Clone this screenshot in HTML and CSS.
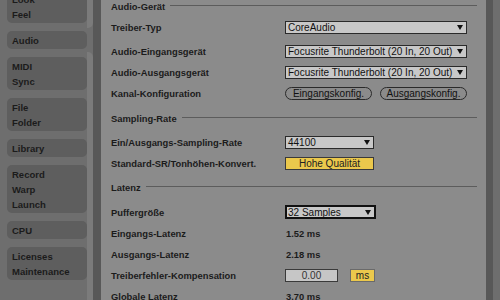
FILE: index.html
```html
<!DOCTYPE html>
<html lang="de">
<head>
  <meta charset="UTF-8">
  <title>Einstellungen – Audio</title>
  <link rel="stylesheet" href="styles.css">
</head>
<body>

<div class="window">
  <nav class="sidebar">
    <div class="tabs">
      <div class="tab first"><span>Look</span><span>Feel</span></div>
      <div class="tab"><span>Audio</span></div>
      <div class="tab"><span>MIDI</span><span>Sync</span></div>
      <div class="tab"><span>File</span><span>Folder</span></div>
      <div class="tab"><span>Library</span></div>
      <div class="tab"><span>Record</span><span>Warp</span><span>Launch</span></div>
      <div class="tab"><span>CPU</span></div>
      <div class="tab"><span>Licenses</span><span>Maintenance</span></div>
    </div>
    <div class="edge">
      <div class="edge-top"></div>
      <div class="edge-bottom"></div>
    </div>
  </nav>

  <div class="divider"></div>

  <main class="panel">
    <!-- Audio-Gerät -->
    <div class="heading first"><span>Audio-Gerät</span></div>
    <div class="row">
      <div class="label">Treiber-Typ</div>
      <div class="select wide">CoreAudio</div>
    </div>
    <div class="row spaced">
      <div class="label">Audio-Eingangsgerät</div>
      <div class="select wide">Focusrite Thunderbolt (20 In, 20 Out)</div>
    </div>
    <div class="row">
      <div class="label">Audio-Ausgangsgerät</div>
      <div class="select wide">Focusrite Thunderbolt (20 In, 20 Out)</div>
    </div>
    <div class="row">
      <div class="label">Kanal-Konfiguration</div>
      <div class="pills">
        <div class="pill">Eingangskonfig.</div>
        <div class="pill">Ausgangskonfig.</div>
      </div>
    </div>

    <!-- Sampling-Rate -->
    <div class="heading section"><span>Sampling-Rate</span></div>
    <div class="row">
      <div class="label">Ein/Ausgangs-Sampling-Rate</div>
      <div class="select narrow">44100</div>
    </div>
    <div class="row">
      <div class="label">Standard-SR/Tonhöhen-Konvert.</div>
      <div class="toggle narrow">Hohe Qualität</div>
    </div>

    <!-- Latenz -->
    <div class="heading section latency"><span>Latenz</span></div>
    <div class="row">
      <div class="label">Puffergröße</div>
      <div class="select narrow focused">32 Samples</div>
    </div>
    <div class="row">
      <div class="label">Eingangs-Latenz</div>
      <div class="value">1.52 ms</div>
    </div>
    <div class="row">
      <div class="label">Ausgangs-Latenz</div>
      <div class="value">2.18 ms</div>
    </div>
    <div class="row">
      <div class="label">Treiberfehler-Kompensation</div>
      <div class="number">0.00</div>
      <div class="toggle unit">ms</div>
    </div>
    <div class="row">
      <div class="label">Globale Latenz</div>
      <div class="value">3.70 ms</div>
    </div>
  </main>

  <div class="scrollbar"></div>
  <div class="rail"></div>
</div>

</body>
</html>
```

FILE: styles.css
```css
body {
  margin: 0;
  padding: 0;
  width: 500px;
  height: 300px;
  overflow: hidden;
  font-family: 'Liberation Sans', Arial, sans-serif;
  color: #1b1b1b;
  background: #6e6e6e;
}

.window {
  display: flex;
  height: 300px;
}

/* Seitenleiste */
.sidebar {
  display: flex;
  width: 93px;
  flex-shrink: 0;
  background: #6e6e6e;
}

.tabs {
  width: 80px;
  padding-left: 7px;
  display: flex;
  flex-direction: column;
  gap: 8px;
}

.tab {
  background: #5e5e5e;
  border-radius: 5px;
  padding: 1.5px 5px;
  font-size: 9.5px;
  font-weight: 700;
  line-height: 15px;
}

.tab span {
  display: block;
}

.tab.first {
  margin-top: -10px;
}

.edge {
  width: 6px;
  display: flex;
  flex-direction: column;
}

.edge-top {
  height: 28px;
  background: #7b7b7b;
  border-bottom-right-radius: 5px;
}

.edge-bottom {
  flex-grow: 1;
  margin-top: 24px;
  background: #7b7b7b;
  border-top-right-radius: 5px;
}

.divider {
  width: 8px;
  flex-shrink: 0;
  background: #585858;
}

/* Hauptbereich */
.panel {
  flex-grow: 1;
  background: #8b8b8b;
  padding: 0 9px 0 10px;
  font-size: 9.4px;
}

.heading {
  display: flex;
  align-items: center;
  height: 21px;
  font-weight: 700;
}

.heading::after {
  content: '';
  flex-grow: 1;
  height: 1px;
  margin: -1px 0 0 5px;
  background: #5c5c5c;
}

.heading.first {
  margin-top: -4.5px;
}

.heading.section {
  margin-top: 4px;
  margin-bottom: 3px;
}

.heading.latency {
  margin-top: 3px;
  margin-bottom: 4px;
}

.row {
  display: flex;
  align-items: center;
  height: 21px;
}

.row.spaced {
  margin-top: 3px;
}

.label {
  width: 174px;
  flex-shrink: 0;
  font-weight: 700;
}

.select {
  display: flex;
  align-items: center;
  box-sizing: border-box;
  height: 13px;
  padding: 0 3px 0 2px;
  border: 1px solid #2a2a2a;
  background: #c8c8c8;
  font-size: 10px;
  color: #111;
  white-space: nowrap;
}

.select::after {
  content: '';
  margin-left: auto;
  border-left: 3.5px solid transparent;
  border-right: 3.5px solid transparent;
  border-top: 5px solid #111;
}

.wide {
  width: 182px;
}

.narrow {
  width: 89px;
}

.select.focused {
  width: 91px;
  height: 14px;
  border: 2px solid #111;
  padding-left: 1px;
}

.pills {
  display: flex;
  gap: 8px;
}

.pill {
  box-sizing: border-box;
  width: 87px;
  height: 13px;
  line-height: 11px;
  border: 1px solid #2a2a2a;
  border-radius: 7px;
  text-align: center;
  font-size: 10px;
  color: #111;
}

.toggle {
  box-sizing: border-box;
  height: 13px;
  line-height: 11px;
  border: 1px solid #3a3a3a;
  background: #ebc84c;
  text-align: center;
  font-size: 10px;
  color: #222;
}

.toggle.unit {
  width: 25px;
  margin-left: 12px;
  border-color: #6a6a6a;
}

.number {
  box-sizing: border-box;
  width: 53px;
  height: 13px;
  line-height: 11px;
  border: 1px solid #3a3a3a;
  background: #c6c6c6;
  text-align: center;
  font-size: 10px;
  color: #333;
}

.value {
  padding-left: 1px;
  font-weight: 700;
}

.scrollbar {
  width: 7px;
  flex-shrink: 0;
  background: #585858;
}

.rail {
  width: 7px;
  flex-shrink: 0;
  background: #6e6e6e;
}
```
